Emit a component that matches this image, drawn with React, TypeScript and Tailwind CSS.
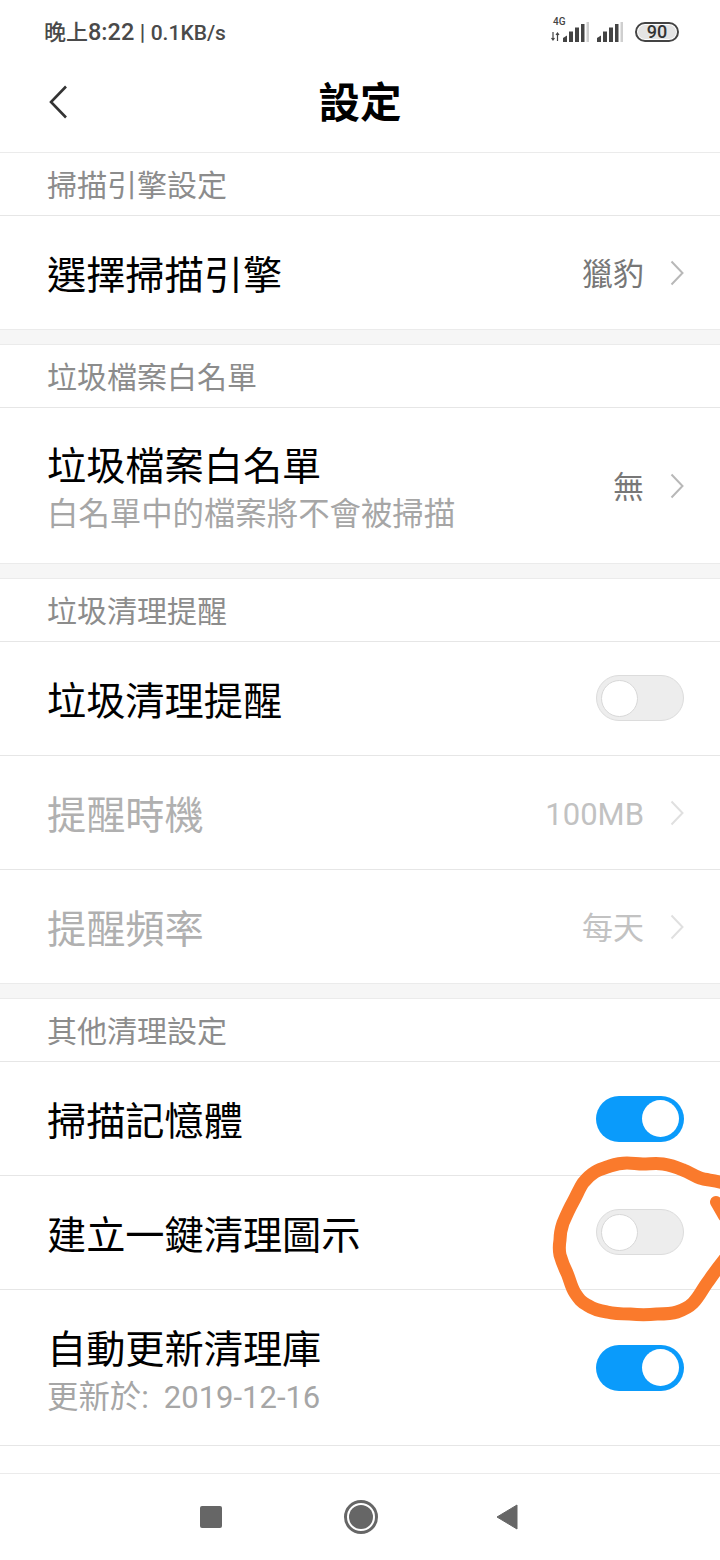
const cjk = "font-['Roboto','Noto_Sans_CJK_TC',sans-serif]";

function Signal() {
  return (
    <svg width="26" height="20" viewBox="0 0 26 20">
      <path d="M0 16 L4 13.5 V20 H0 Z" fill="#444" />
      <rect x="6" y="9.5" width="4" height="10.5" fill="#444" />
      <rect x="12" y="5.5" width="4" height="14.5" fill="#444" />
      <rect x="18" y="2" width="3.5" height="18" fill="#444" />
      <rect x="23.5" y="0" width="2.5" height="20" fill="#cfcfcf" />
    </svg>
  );
}

function Chevron({ light }: { light?: boolean }) {
  return (
    <svg width="14" height="26" viewBox="0 0 14 26" fill="none" className="ml-[26px]">
      <path d="M1.5 1.5 L12.5 13 L1.5 24.5" stroke={light ? "#e0e0e0" : "#b8b8b8"} strokeWidth="2" />
    </svg>
  );
}

function Toggle({ on }: { on?: boolean }) {
  return (
    <div
      className={
        on
          ? "flex h-[46px] w-[88px] items-center justify-end rounded-full bg-[#0a9bfb] pr-[5px]"
          : "mb-[1px] flex h-[46px] w-[88px] items-center rounded-full border border-[#dcdcdc] bg-[#ededed] pl-[4px]"
      }
    >
      <div className={on ? "h-[37px] w-[37px] rounded-full bg-white" : "h-[37px] w-[37px] rounded-full border border-[#d8d8d8] bg-white"} />
    </div>
  );
}

function SectionHead({ title }: { title: string }) {
  return (
    <div className="flex h-[63px] items-center border-b border-[#e6e6e6] pl-[47px] pt-[4px]">
      <span className="text-[30px] leading-none text-[#8c8c8c]">{title}</span>
    </div>
  );
}

function Row({ title, sub, date, value, disabled, toggle, tall, last }: {
  title: string;
  sub?: string;
  date?: string;
  value?: string;
  disabled?: boolean;
  toggle?: "on" | "off";
  tall?: boolean;
  last?: boolean;
}) {
  const height = tall ? (last ? "h-[155px]" : "h-[156px]") : last ? "h-[113px]" : "h-[114px]";
  const offset = tall ? (last ? "pt-[9px]" : "pt-[11px]") : "pt-[7px]";
  return (
    <div className={`flex items-center justify-between pl-[47px] pr-[36px] ${height} ${last ? "" : "border-b border-[#e6e6e6]"}`}>
      <div className={`flex flex-col ${offset}`}>
        <span className={`text-[39.2px] leading-[48px] ${disabled ? "text-[#b0b0b0]" : "text-black"}`}>{title}</span>
        {sub && (
          <span className="text-[31.4px] leading-[47px] text-[#a6a6a6]">
            {sub}
            {date && <span className="ml-[15px] text-[31px]">{date}</span>}
          </span>
        )}
      </div>
      {toggle && <Toggle on={toggle === "on"} />}
      {value && (
        <div className="flex items-center">
          <span className={`pt-[6px] text-[31px] ${disabled ? "text-[#c2c2c2]" : "text-[#777777]"}`}>{value}</span>
          <Chevron light={disabled} />
        </div>
      )}
    </div>
  );
}

function Gap() {
  return <div className="h-[16px] border-y border-[#ebebeb] bg-[#f6f6f6]" />;
}

export default function App() {
  return (
    <div className={`relative h-[1560px] w-[720px] overflow-hidden bg-white ${cjk}`}>
      {/* status bar */}
      <div className="flex h-[64px] items-center justify-between pl-[44px] pr-[41px]">
        <span className="pt-[2px] text-[22px] font-medium leading-none text-[#4a4a4a]">
          晚上<span className="text-[23.5px]">8:22</span> | <span className="text-[21px]">0.1KB/s</span>
        </span>
        <div className="flex items-center">
          <div className="relative h-[24px] w-[12px]">
            <span className="absolute left-[2px] top-[-4px] text-[10px] font-medium leading-[12px] text-[#444]">4G</span>
            <svg width="9" height="9" viewBox="0 0 9 9" fill="none" className="absolute left-0 top-[12px]">
              <path d="M2 0 V8 M0.5 6 L2 8 L3.5 6 M6.5 9 V1 M5 3 L6.5 1 L8 3" stroke="#444" strokeWidth="1.2" />
            </svg>
          </div>
          <Signal />
          <div className="ml-[8px]"><Signal /></div>
          <div className="ml-[12px] flex h-[20px] w-[44px] items-center justify-center rounded-full border-2 border-[#444] p-[1px]">
            <div className="flex h-full w-full items-center justify-center rounded-full bg-[#e4e4e4] text-[18px] font-medium leading-none text-[#333]">90</div>
          </div>
        </div>
      </div>

      {/* header */}
      <div className="relative flex h-[89px] items-center justify-center border-b border-[#ebebeb] pb-[8px]">
        <svg width="20" height="34" viewBox="0 0 20 34" fill="none" className="absolute left-[49px] top-[21px]">
          <path d="M17 1.5 L2 17 L17 32.5" stroke="#333" strokeWidth="2.6" />
        </svg>
        <span className="text-[41.5px] font-bold leading-none text-black">設定</span>
      </div>

      <SectionHead title="掃描引擎設定" />
      <Row title="選擇掃描引擎" value="獵豹" last />
      <Gap />
      <SectionHead title="垃圾檔案白名單" />
      <Row title="垃圾檔案白名單" sub="白名單中的檔案將不會被掃描" value="無" tall last />
      <Gap />
      <SectionHead title="垃圾清理提醒" />
      <Row title="垃圾清理提醒" toggle="off" />
      <Row title="提醒時機" value="100MB" disabled />
      <Row title="提醒頻率" value="每天" disabled last />
      <Gap />
      <SectionHead title="其他清理設定" />
      <Row title="掃描記憶體" toggle="on" />
      <Row title="建立一鍵清理圖示" toggle="off" />
      <Row title="自動更新清理庫" sub="更新於:" date="2019-12-16" toggle="on" tall />

      {/* nav bar */}
      <div className="mt-[27px] flex h-[87px] items-center border-t border-[#ebebeb]">
        <div className="ml-[200px] h-[22px] w-[22px] rounded-[2px] bg-[#666]" />
        <div className="ml-[122px] flex h-[34px] w-[34px] items-center justify-center rounded-full border-[3px] border-[#666]">
          <div className="h-[24px] w-[24px] rounded-full bg-[#666]" />
        </div>
        <svg width="22" height="26" viewBox="0 0 22 26" className="ml-[118px]">
          <path d="M1 13 L21 1 V25 Z" fill="#666" stroke="#666" strokeLinejoin="round" />
        </svg>
      </div>

      {/* hand drawn annotation */}
      <svg className="absolute left-0 top-0" width="720" height="1560" fill="none">
        <path
          d="M724 1183 C712 1180 706 1180 700 1178 C694 1176 689 1172 683 1170 C676 1167 670 1165 663 1164 C656 1163 650 1164 643 1164 C637 1164 633 1163 627 1163 C620 1163 616 1164 610 1166 C604 1168 600 1169 595 1172 C590 1175 587 1178 583 1183 C579 1189 577 1195 573 1202 C569 1209 566 1216 563 1223 C561 1229 560 1234 560 1240 C559 1246 559 1250 560 1255 C562 1262 564 1267 567 1273 C570 1280 571 1287 575 1293 C579 1299 581 1302 587 1305 C593 1309 600 1311 607 1312 C615 1314 622 1314 630 1314 C639 1315 648 1315 657 1314 C664 1314 671 1314 677 1312 C683 1310 688 1308 693 1303 C699 1297 702 1290 707 1283 C712 1276 716 1270 724 1260"
          stroke="#fa7a2c"
          strokeWidth="13"
          strokeLinecap="round"
          strokeLinejoin="round"
        />
        <path d="M716 1202 L724 1216" stroke="#fa7a2c" strokeWidth="12" strokeLinecap="round" />
      </svg>
    </div>
  );
}
